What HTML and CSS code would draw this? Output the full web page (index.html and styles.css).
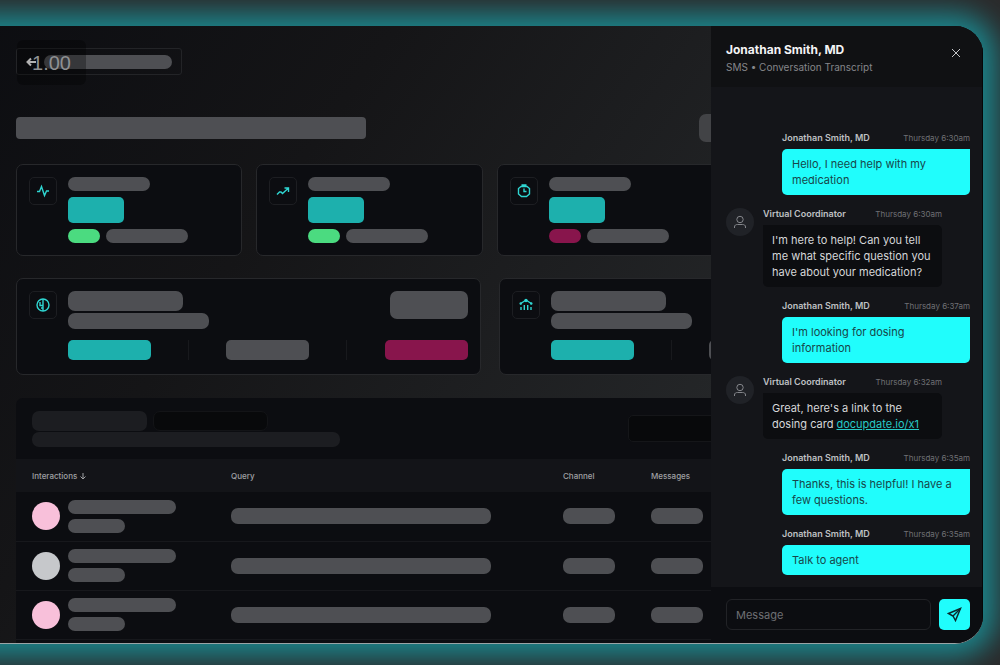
FILE: index.html
```html
<!DOCTYPE html>
<html lang="en">
<head>
  <meta charset="UTF-8">
  <meta name="viewport" content="width=device-width, initial-scale=1.0">
  <title>Conversation Transcript</title>
  <link rel="stylesheet" href="styles.css">
</head>
<body>
  <div class="window">

    <main class="dashboard">
      <div class="toolbar">
        <button class="back" type="button" aria-label="Back">
          <svg width="12" height="12" viewBox="0 0 12 12"><path d="M10 6H1.5M5 2.5L1.5 6L5 9.5"/></svg>
          <span class="bar back-label"></span>
        </button>
        <div class="zoom-level">1.00</div>
      </div>

      <div class="title-row">
        <span class="bar title"></span>
        <span class="bar range"></span>
      </div>

      <section class="stats">
        <div class="card">
          <span class="icon"><svg width="14" height="14" viewBox="0 0 14 14"><path d="M1 7.5H3.5L5.5 2.5L8.5 11.5L10.5 7H13"/></svg></span>
          <div class="stat-body">
            <span class="bar w82"></span>
            <span class="bar value"></span>
            <div class="trend"><span class="bar delta up"></span><span class="bar w82"></span></div>
          </div>
        </div>
        <div class="card">
          <span class="icon"><svg width="14" height="14" viewBox="0 0 14 14"><path d="M1 10.5L3.5 8L5 8L6.5 9.5L12.5 4M8.5 4H12.5V8"/></svg></span>
          <div class="stat-body">
            <span class="bar w82"></span>
            <span class="bar value"></span>
            <div class="trend"><span class="bar delta up"></span><span class="bar w82"></span></div>
          </div>
        </div>
        <div class="card">
          <span class="icon"><svg width="14" height="14" viewBox="0 0 14 14"><path d="M4.5 1H9.5M4 2.5L1.5 4.5V10L4.5 12.5H9.5L12.5 10V4.5L10 2.5ZM7 4.5V7.5H9.5"/></svg></span>
          <div class="stat-body">
            <span class="bar w82"></span>
            <span class="bar value"></span>
            <div class="trend"><span class="bar delta down"></span><span class="bar w82"></span></div>
          </div>
        </div>
        <div class="card"></div>
      </section>

      <section class="groups">
        <div class="card">
          <span class="icon"><svg width="14" height="14" viewBox="0 0 14 14"><circle cx="7" cy="7" r="6"/><path d="M7 1V13M4 4V7.5H7M5 10H7"/></svg></span>
          <div class="group-body">
            <div class="group-head">
              <div class="group-title"><span class="bar name"></span><span class="bar note"></span></div>
              <span class="bar action"></span>
            </div>
            <div class="split">
              <span class="bar part teal"></span><i class="divider"></i>
              <span class="bar part"></span><i class="divider"></i>
              <span class="bar part down"></span>
            </div>
          </div>
        </div>
        <div class="card">
          <span class="icon"><svg width="14" height="14" viewBox="0 0 14 14"><path d="M1 6L4 4L7 2L10 4L13 6M2 9V12M5.3 7V12M8.7 7V12M12 9V12"/><circle cx="7" cy="2.5" r="1"/><circle cx="1.8" cy="5.5" r=".6"/><circle cx="12.2" cy="5.5" r=".6"/></svg></span>
          <div class="group-body">
            <div class="group-head">
              <div class="group-title"><span class="bar name"></span><span class="bar note"></span></div>
              <span class="bar action"></span>
            </div>
            <div class="split">
              <span class="bar part teal"></span><i class="divider"></i>
              <span class="bar part"></span><i class="divider"></i>
              <span class="bar part down"></span>
            </div>
          </div>
        </div>
      </section>

      <section class="panel">
        <div class="panel-head">
          <div>
            <div class="panel-title"><span class="bar dim"></span><span class="bar hollow"></span></div>
            <span class="bar dim wide"></span>
          </div>
          <input class="search" type="text" aria-label="Search">
        </div>
        <table>
          <thead>
            <tr>
              <th class="col-who">Interactions <svg width="8" height="8" viewBox="0 0 8 8"><path d="M4 1V7M1.5 4.5L4 7L6.5 4.5"/></svg></th>
              <th class="col-query">Query</th>
              <th class="col-channel">Channel</th>
              <th>Messages</th>
            </tr>
          </thead>
          <tbody>
            <tr>
              <td><div class="who"><span class="dot"></span><div><span class="bar full-name"></span><span class="bar role"></span></div></div></td>
              <td><span class="bar query"></span></td>
              <td><span class="bar tag"></span></td>
              <td><span class="bar tag"></span></td>
            </tr>
            <tr>
              <td><div class="who"><span class="dot grey"></span><div><span class="bar full-name"></span><span class="bar role"></span></div></div></td>
              <td><span class="bar query"></span></td>
              <td><span class="bar tag"></span></td>
              <td><span class="bar tag"></span></td>
            </tr>
            <tr>
              <td><div class="who"><span class="dot"></span><div><span class="bar full-name"></span><span class="bar role"></span></div></div></td>
              <td><span class="bar query"></span></td>
              <td><span class="bar tag"></span></td>
              <td><span class="bar tag"></span></td>
            </tr>
          </tbody>
        </table>
      </section>
    </main>

    <aside class="drawer">
      <header class="drawer-head">
        <div>
          <h1>Jonathan Smith, MD</h1>
          <p>SMS • Conversation Transcript</p>
        </div>
        <button class="close" type="button" aria-label="Close">
          <svg width="10" height="10" viewBox="0 0 10 10"><path d="M1 1L9 9M9 1L1 9"/></svg>
        </button>
      </header>

      <div class="chat">
        <div class="message user">
          <div class="meta"><b>Jonathan Smith, MD</b><time>Thursday 6:30am</time></div>
          <p class="bubble">Hello, I need help with my medication</p>
        </div>

        <div class="message bot">
          <span class="avatar"><svg width="14" height="14" viewBox="0 0 14 14"><circle cx="7" cy="4.5" r="3.2"/><path d="M1.5 13V12C1.5 10 3 9.5 4.5 9.5H9.5C11 9.5 12.5 10 12.5 12V13"/></svg></span>
          <div class="content">
            <div class="meta"><b>Virtual Coordinator</b><time>Thursday 6:30am</time></div>
            <p class="bubble">I'm here to help! Can you tell me what specific question you have about your medication?</p>
          </div>
        </div>

        <div class="message user">
          <div class="meta"><b>Jonathan Smith, MD</b><time>Thursday 6:37am</time></div>
          <p class="bubble">I'm looking for dosing information</p>
        </div>

        <div class="message bot">
          <span class="avatar"><svg width="14" height="14" viewBox="0 0 14 14"><circle cx="7" cy="4.5" r="3.2"/><path d="M1.5 13V12C1.5 10 3 9.5 4.5 9.5H9.5C11 9.5 12.5 10 12.5 12V13"/></svg></span>
          <div class="content">
            <div class="meta"><b>Virtual Coordinator</b><time>Thursday 6:32am</time></div>
            <p class="bubble">Great, here's a link to the<br>dosing card <a href="#">docupdate.io/x1</a></p>
          </div>
        </div>

        <div class="message user">
          <div class="meta"><b>Jonathan Smith, MD</b><time>Thursday 6:35am</time></div>
          <p class="bubble">Thanks, this is helpful! I have a few questions.</p>
        </div>

        <div class="message user">
          <div class="meta"><b>Jonathan Smith, MD</b><time>Thursday 6:35am</time></div>
          <p class="bubble">Talk to agent</p>
        </div>
      </div>

      <form class="composer">
        <input type="text" placeholder="Message" aria-label="Message">
        <button type="submit" aria-label="Send">
          <svg width="15" height="15" viewBox="0 0 15 15"><path d="M13.5 1.5L1.5 6.5L6 9L8.5 13.5Z"/><path d="M6 9L13.5 1.5"/></svg>
        </button>
      </form>
    </aside>

  </div>
</body>
</html>
```

FILE: styles.css
```css
* {
  box-sizing: border-box;
}

body {
  margin: 0;
  height: 100vh;
  padding: 26px 17px 21px 0;
  overflow: hidden;
  background: #2b2a2b;
  color: #e4e4e6;
  font-family: Inter, "Liberation Sans", sans-serif;
}

h1, p {
  margin: 0;
}

button {
  padding: 0;
  border: none;
  background: none;
  cursor: pointer;
}

svg {
  fill: none;
  stroke: currentColor;
  stroke-width: 1;
  display: block;
}

/* the window runs off the left side of the page */
.window {
  position: relative;
  height: 100%;
  margin-left: -40px;
  padding-left: 40px;
  overflow: hidden;
  border-bottom: 1px solid #9aa5a6;
  border-radius: 0 28px 28px 0;
  background: linear-gradient(125deg, #0c0d11 0%, #151517 30%, #242628 70%);
  box-shadow: 0 0 28px 13px #1b868d;
}

/* dashboard */
.dashboard {
  display: flex;
  flex-direction: column;
  height: 100%;
  padding: 22px 20px 0 16px;
}

.bar {
  display: block;
  height: 14px;
  border-radius: 7px;
  background: #4e4f53;
}

.toolbar {
  position: relative;
}

.back {
  display: flex;
  align-items: center;
  gap: 6px;
  height: 27px;
  padding: 0 9px;
  border: 1px solid #232427;
  border-radius: 3px;
  color: #ffffff;
}

.back svg {
  stroke-width: 2;
}

.back-label {
  width: 128px;
}

.zoom-level {
  position: absolute;
  top: -8px;
  left: 1px;
  width: 69px;
  height: 45px;
  border-radius: 6px;
  background: rgba(0, 0, 0, 0.3);
  color: #8f9092;
  font: 20px/46px "Liberation Sans", sans-serif;
  text-align: center;
}

.title-row {
  display: flex;
  align-items: center;
  justify-content: space-between;
  margin: 39px 0 22px;
}

.title {
  width: 350px;
  height: 22px;
  border-radius: 4px;
}

.range {
  width: 264px;
  height: 28px;
  background: #424346;
}

.stats {
  display: grid;
  grid-template-columns: repeat(4, 1fr);
  gap: 14px;
}

.groups {
  display: grid;
  grid-template-columns: repeat(2, 1fr);
  gap: 18px;
  margin: 22px 0 23px;
}

.card {
  display: flex;
  gap: 11px;
  padding: 12px;
  border: 1px solid #27282b;
  border-radius: 7px;
  background: #0c0d11;
}

.icon {
  display: flex;
  flex: none;
  align-items: center;
  justify-content: center;
  width: 28px;
  height: 28px;
  border: 1px solid #1d1e22;
  border-radius: 5px;
  color: #2fd6d2;
}

.icon svg {
  stroke-width: 1.4;
}

.stat-body {
  display: flex;
  flex-direction: column;
  gap: 6px;
}

.w82 {
  width: 82px;
}

.value {
  width: 56px;
  height: 26px;
  border-radius: 5px;
  background: #1db0ad;
}

.trend {
  display: flex;
  gap: 6px;
}

.delta {
  width: 32px;
}

.up {
  background: #4bdb80;
}

.down {
  background: #88154c;
}

.teal {
  background: #1db0ad;
}

.group-body {
  flex: 1;
}

.group-head {
  display: flex;
  justify-content: space-between;
  margin-bottom: 11px;
}

.name {
  width: 115px;
  height: 20px;
  margin-bottom: 2px;
}

.note {
  width: 141px;
  height: 16px;
}

.action {
  width: 78px;
  height: 28px;
}

.split {
  display: flex;
  justify-content: space-between;
  padding-bottom: 2px;
}

.part {
  width: 83px;
  height: 20px;
  border-radius: 5px;
}

.divider {
  width: 1px;
  height: 20px;
  background: #18191d;
}

.panel {
  flex: 1;
  border-radius: 7px 7px 0 0;
  background: #0c0d11;
}

.panel-head {
  display: flex;
  align-items: center;
  justify-content: space-between;
  height: 61px;
  padding: 0 16px;
}

.panel-title {
  display: flex;
  gap: 6px;
  margin-bottom: 1px;
}

.dim {
  width: 115px;
  height: 20px;
  background: #1c1d21;
}

.wide {
  width: 308px;
  height: 15px;
}

.hollow {
  width: 115px;
  height: 20px;
  border: 1px solid #131417;
  background: #08090b;
}

.search {
  width: 319px;
  height: 27px;
  border: 1px solid #151619;
  border-radius: 5px;
  background: #08090b;
  color: inherit;
}

table {
  width: 100%;
  border-collapse: collapse;
  table-layout: fixed;
}

th {
  height: 33px;
  padding: 0 16px;
  background: #131418;
  color: #a0a1a4;
  font-size: 8px;
  font-weight: 500;
  text-align: left;
}

th svg {
  display: inline-block;
  vertical-align: middle;
}

.col-who {
  width: 199px;
}

.col-query {
  width: 332px;
}

.col-channel {
  width: 88px;
}

td {
  height: 49px;
  padding: 0 16px;
  border-bottom: 1px solid #17181c;
}

.who {
  display: flex;
  align-items: center;
  gap: 8px;
}

.dot {
  width: 28px;
  height: 28px;
  border-radius: 50%;
  background: #f8c0da;
}

.grey {
  background: #c6c8cb;
}

.full-name {
  width: 108px;
  margin-bottom: 5px;
}

.role {
  width: 57px;
}

.query {
  width: 260px;
  height: 16px;
}

.tag {
  width: 52px;
  height: 16px;
}

/* transcript drawer, slides over the dashboard */
.drawer {
  position: absolute;
  top: 0;
  right: 0;
  bottom: 0;
  display: flex;
  flex-direction: column;
  width: 272px;
  border-right: 1px solid #050607;
  background: #141519;
}

.drawer-head {
  display: flex;
  align-items: flex-start;
  justify-content: space-between;
  height: 61px;
  padding: 15px 21px 0 15px;
  background: #101113;
}

.drawer-head h1 {
  font-size: 12px;
  font-weight: 700;
  line-height: 18px;
  color: #f4f4f5;
}

.drawer-head p {
  font-size: 10px;
  line-height: 16px;
  color: #85868a;
}

.close {
  margin-top: 7px;
  color: #c4c5c8;
}

.chat {
  display: flex;
  flex: 1;
  flex-direction: column;
  justify-content: flex-end;
  gap: 13px;
  padding: 12px 12px 12px 15px;
}

.user {
  width: 188px;
  margin-left: auto;
}

.bot {
  display: flex;
  gap: 9px;
}

.content {
  width: 179px;
}

.avatar {
  display: flex;
  align-items: center;
  justify-content: center;
  width: 28px;
  height: 28px;
  border-radius: 50%;
  background: #202227;
  color: #85878c;
}

.meta {
  display: flex;
  justify-content: space-between;
  margin-bottom: 5px;
  font-size: 9px;
  line-height: 12px;
}

.meta b {
  font-weight: 600;
  color: #bfc0c3;
}

.meta time {
  font-size: 8px;
  color: #6f7074;
}

.bubble {
  padding: 7px 10px;
  border-radius: 5px 0 5px 5px;
  background: #20fdfc;
  color: #17474a;
  font-size: 11px;
  line-height: 16px;
}

.bot .bubble {
  padding: 7px 9px;
  border-radius: 0 5px 5px 5px;
  background: #0c0d10;
  color: #d6d7d9;
}

.bubble a {
  display: inline-block;
  color: #27c9c6;
}

.composer {
  display: flex;
  gap: 8px;
  padding: 12px 12px 13px 15px;
  background: #0c0d11;
}

.composer input {
  flex: 1;
  min-width: 0;
  height: 31px;
  padding: 0 9px;
  border: 1px solid #222327;
  border-radius: 6px;
  background: transparent;
  color: #d6d7d9;
  font: 11px Inter, "Liberation Sans", sans-serif;
}

.composer input::placeholder {
  color: #6f7074;
}

.composer button {
  display: flex;
  align-items: center;
  justify-content: center;
  width: 31px;
  height: 31px;
  border-radius: 5px;
  background: #20fdfc;
  color: #0c2a2c;
}

.composer svg {
  stroke-width: 1.5;
}
```
